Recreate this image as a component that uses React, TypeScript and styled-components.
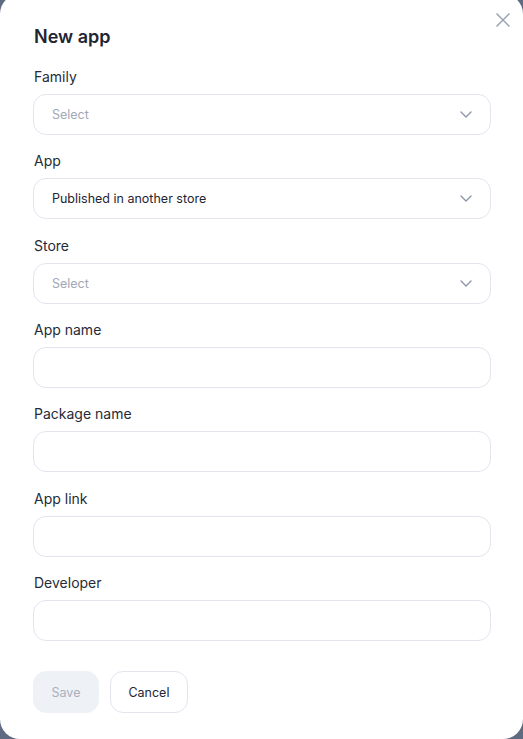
import React from "react";
import styled, {createGlobalStyle} from "styled-components";

const GlobalStyle = createGlobalStyle`
  html, body {
    margin: 0;
    padding: 0;
    background: #5f6b80;
    overflow: hidden;
  }
  body {
    font-family: Inter, "Noto Sans", sans-serif;
  }
`;

const Modal = styled.div`
  position: relative;
  box-sizing: border-box;
  width: 523px;
  height: 745px;
  margin-top: -6px;
  padding: 31px 32px 0 33px;
  background: #fff;
  border-radius: 20px;
  display: flex;
  flex-direction: column;
`;

const Title = styled.h2`
  margin: 0 0 18px 1px;
  font-size: 18px;
  line-height: 24px;
  font-weight: 600;
  color: #1f2533;
`;

const CloseButton = styled.button`
  position: absolute;
  top: 17px;
  right: 11px;
  width: 18px;
  height: 18px;
  padding: 0;
  border: none;
  background: none;
  color: #9ba3b4;
  cursor: pointer;
  display: flex;
  align-items: center;
  justify-content: center;
`;

const Field = styled.div`
  display: flex;
  flex-direction: column;
  gap: 7px;
  margin-bottom: 16.33px;
`;

const Label = styled.label`
  margin-left: 1px;
  font-size: 14px;
  line-height: 20px;
  color: #262b38;
`;

const Box = styled.div`
  box-sizing: border-box;
  height: 41px;
  border: 1px solid #e3e4ef;
  border-radius: 13px;
  padding: 0 18px 0 18px;
  display: flex;
  align-items: center;
  background: #fff;
`;

const Value = styled.span<{ $muted?: boolean }>`
  flex: 1;
  font-size: 12.5px;
  color: ${p => (p.$muted ? "#a1a8b8" : "#1f2533")};
`;

const Actions = styled.div`
  display: flex;
  gap: 11px;
  margin-top: 14px;
`;

const Button = styled.button<{ $primary?: boolean }>`
  box-sizing: border-box;
  height: 42px;
  padding: 0 17.5px;
  border-radius: 13px;
  font-family: inherit;
  font-size: 12.5px;
  border: 1px solid ${p => (p.$primary ? "#eef1f6" : "#e3e4ef")};
  background: ${p => (p.$primary ? "#eef1f6" : "#fff")};
  color: ${p => (p.$primary ? "#a8afbe" : "#1f2533")};
`;

const Chevron = () => (
  <svg width="12" height="7" viewBox="0 0 12 7" fill="none">
    <path d="M1 1l5 5 5-5" stroke="#8d95a8" strokeWidth="1.4" strokeLinecap="round" strokeLinejoin="round"/>
  </svg>
);

const SelectField = ({label, value}: { label: string, value?: string }) => (
  <Field>
    <Label>{label}</Label>
    <Box>
      <Value $muted={!value}>{value || "Select"}</Value>
      <Chevron/>
    </Box>
  </Field>
);

const TextField = ({label}: { label: string }) => (
  <Field>
    <Label>{label}</Label>
    <Box/>
  </Field>
);

export default function App() {
  return (
    <>
      <GlobalStyle/>
      <Modal>
        <CloseButton aria-label="Close">
          <svg width="16" height="16" viewBox="0 0 16 16" fill="none">
            <path d="M1.5 1.5l13 13M14.5 1.5l-13 13" stroke="currentColor" strokeWidth="1.5"/>
          </svg>
        </CloseButton>
        <Title>New app</Title>
        <SelectField label="Family"/>
        <SelectField label="App" value="Published in another store"/>
        <SelectField label="Store"/>
        <TextField label="App name"/>
        <TextField label="Package name"/>
        <TextField label="App link"/>
        <TextField label="Developer"/>
        <Actions>
          <Button $primary>Save</Button>
          <Button>Cancel</Button>
        </Actions>
      </Modal>
    </>
  );
}
